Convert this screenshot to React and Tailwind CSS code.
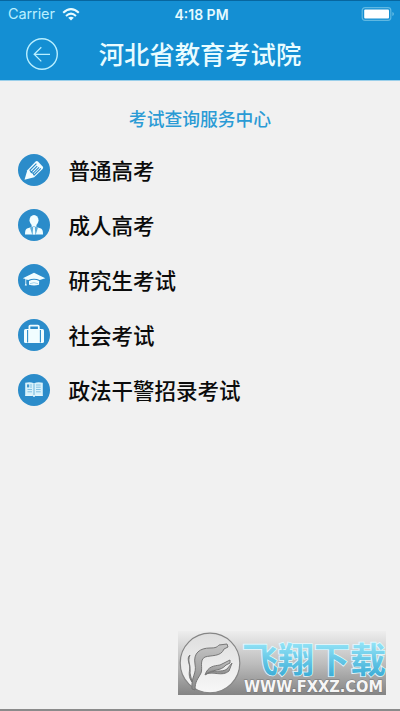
const PencilIcon = () => {
  return (
    <svg width="32" height="32" viewBox="0 0 32 32" fill="none">
      <path
        d="M6.5 25.7L9.3 16.2L17.6 7.6Q18.8 6.5 20 7.6L24.7 12.5Q25.7 13.7 24.6 14.9L16.2 23.3Z"
        fill="#f1fdff"
      />
      <path
        d="M18.4 9.6L12 16.2L13.2 18.2L19.2 12.2M13.2 18.2L15.1 19.3L21 13.4M15.1 19.3L16.1 21L22.8 14.4"
        stroke="#2b8cca"
        strokeWidth="1.2"
      />
    </svg>
  );
};

const PersonIcon = () => {
  return (
    <svg width="32" height="32" viewBox="0 0 32 32" fill="none">
      <ellipse cx="16" cy="11.2" rx="4.5" ry="5.3" fill="#f1fdff" />
      <path
        d="M13.6 15H18.4V18L23 19.5Q25 20.3 25 25.4H7Q7 20.3 9 19.5L13.6 18Z"
        fill="#f1fdff"
      />
      <path d="M12 18.5L14.2 25.4H17.8L20 18.5L16 17.3Z" fill="#5cacd9" />
      <path d="M15.2 18H16.8L17.3 24.5L16 26L14.7 24.5Z" fill="#f1fdff" />
    </svg>
  );
};

const CapIcon = () => {
  return (
    <svg width="32" height="32" viewBox="0 0 32 32" fill="none">
      <path
        d="M16 8.8L27.3 14.2L21.8 15.9Q16 13.8 10.2 15.9L8.2 15.4V19.5L8.9 21.4H6.8L7.4 19.5V15L4.8 14.2Z"
        fill="#f1fdff"
      />
      <path
        d="M11 17Q16 14.5 21.2 17L21 20.8Q16 22.4 11 20.8Z"
        fill="#f1fdff"
      />
      <path d="M12 19.7Q16 17.6 20 19.7" stroke="#91c9e7" strokeWidth="0.8" />
    </svg>
  );
};

const CaseIcon = () => {
  return (
    <svg width="32" height="32" viewBox="0 0 32 32" fill="none">
      <path
        d="M11.4 10.5V7.6Q11.4 6.6 12.4 6.6H19.8Q20.8 6.6 20.8 7.6V10.5"
        stroke="#f1fdff"
        strokeWidth="1.8"
      />
      <rect x="6" y="10" width="20" height="14" rx="1.6" fill="#f1fdff" />
      <path d="M9.6 11V23.5M22.4 11V23.5" stroke="#2b8cca" strokeWidth="1.1" />
    </svg>
  );
};

const BookIcon = () => {
  return (
    <svg width="32" height="32" viewBox="0 0 32 32" fill="none">
      <path
        d="M7.2 8.8Q12 7.4 16 9.2Q20 7.4 24.8 8.8V21.6H17.5L16 22.5L14.5 21.6H7.2Z"
        fill="#d8f2fb"
      />
      <path d="M16 9.5V21" stroke="#71b5dc" strokeWidth="1" />
      <path
        d="M12 11H14M12 13H14M9.5 15.5H14M9.5 17.8H14M18 11H22.7M18 13.2H22.7M18 15.5H22.7M18 17.8H22.7"
        stroke="#79bce0"
        strokeWidth="0.9"
      />
      <rect x="9" y="10.4" width="2.2" height="3" fill="#4197ce" />
      <path d="M7.2 21.4H14.5L16 22.5L17.5 21.4H24.8" stroke="#f1fdff" />
    </svg>
  );
};

const BackIcon = () => {
  return (
    <svg width="34" height="34" viewBox="0 0 34 34" fill="none">
      <circle cx="17" cy="17" r="15.3" stroke="#b9efff" strokeWidth="1.4" />
      <path
        d="M25 17.3H9.5M16.3 10.2L9.2 17.3L16.3 24.4"
        stroke="#b9efff"
        strokeWidth="1.3"
      />
    </svg>
  );
};

const WifiIcon = () => {
  return (
    <svg width="18" height="13" viewBox="0 0 18 13" fill="none">
      <path
        d="M1.2 4.8Q9 -2.4 16.8 4.8"
        stroke="#e9fcff"
        strokeWidth="2.1"
      />
      <path d="M4 7.9Q9 3.4 14 7.9" stroke="#e9fcff" strokeWidth="2" />
      <path d="M6.2 9.8Q9 7.5 11.8 9.8L9 12.6Z" fill="#e9fcff" />
    </svg>
  );
};

const BatteryIcon = () => {
  return (
    <svg width="34" height="14" viewBox="0 0 34 14" fill="none">
      <rect
        x="1.2"
        y="0.7"
        width="28.6"
        height="12.6"
        rx="2.8"
        stroke="#5fb8e2"
        strokeWidth="1.2"
      />
      <rect x="3.2" y="2.6" width="24.8" height="8.8" rx="1" fill="white" />
      <path d="M31.3 5V9Q33 8.5 33 7T31.3 5" fill="#5fb8e2" />
    </svg>
  );
};

const SiteLogo = () => {
  return (
    <svg width="208" height="64" viewBox="0 0 208 64">
      <defs>
        <linearGradient id="panel" x1="0" y1="0" x2="0" y2="1">
          <stop offset="0" stopColor="#eeeeee" />
          <stop offset="0.5" stopColor="#bebebe" />
          <stop offset="1" stopColor="#848484" />
        </linearGradient>
        <linearGradient id="disc" x1="0" y1="0" x2="0" y2="1">
          <stop offset="0" stopColor="#dedede" />
          <stop offset="1" stopColor="#f7f7f7" />
        </linearGradient>
        <linearGradient id="wing" x1="0" y1="0" x2="0" y2="1">
          <stop offset="0" stopColor="#c4c4c4" />
          <stop offset="1" stopColor="#8b8b8b" />
        </linearGradient>
        <linearGradient id="name" x1="0" y1="0" x2="0" y2="1">
          <stop offset="0.15" stopColor="#9ce9fa" />
          <stop offset="0.9" stopColor="#39abd5" />
        </linearGradient>
      </defs>
      <rect width="208" height="64" fill="url(#panel)" />
      <circle
        cx="32"
        cy="32"
        r="29.8"
        fill="url(#disc)"
        stroke="#858585"
        strokeWidth="1.2"
      />
      <g fill="url(#wing)" stroke="#777777" strokeWidth="1">
        <path d="M14 58C13 45 19 43 17 33C15 22 22 17 32 17C38 17 39 16 41 14L49 13L50 16L46 18C43 26 33 24 27 26C21 29 25 37 23 42C20 48 17 50 17 59Z" />
        <path d="M12 24C9 30 13 37 12 42L14 51C8 43 14 37 11 32Q9 26 12 24Z" />
        <path d="M27 44C30 35 36 35 42 34L46 32L52 29L52 32L48 34C42 41 36 37 27 44Z" />
        <path d="M28 43C36 38 44 42 49 38L54 32L51 40C44 46 36 40 28 43Z" />
      </g>
      <text
        x="64"
        y="41.5"
        textLength="144"
        lengthAdjust="spacingAndGlyphs"
        className="font-['Noto_Sans_CJK_SC',sans-serif] text-[35px] font-bold"
        fill="url(#name)"
        stroke="#e3f9fe"
        strokeWidth="1.6"
        paintOrder="stroke"
      >
        飞翔下载
      </text>
      <text
        x="66"
        y="60.5"
        textLength="139"
        lengthAdjust="spacingAndGlyphs"
        className="font-['DejaVu_Sans',sans-serif] text-[15px] font-bold"
        fill="#f6f6f6"
        stroke="#777777"
        strokeWidth="1"
        paintOrder="stroke"
      >
        WWW.FXXZ.COM
      </text>
    </svg>
  );
};

const exams = [
  { name: "普通高考", Icon: PencilIcon },
  { name: "成人高考", Icon: PersonIcon },
  { name: "研究生考试", Icon: CapIcon },
  { name: "社会考试", Icon: CaseIcon },
  { name: "政法干警招录考试", Icon: BookIcon },
];

const Header = () => {
  return (
    <header className="h-[81px] shrink-0 border-t border-t-[#07669f] border-b border-b-[#9acfea] bg-[#148fd3]">
      <div className="grid h-[26px] grid-cols-3 items-center pl-2 pr-[5px] font-['Inter',sans-serif] text-[#e5faff]">
        <div className="flex items-center gap-[7px]">
          <span className="text-[14.5px] tracking-[-0.1px] text-[#b9efff]">
            Carrier
          </span>
          <WifiIcon />
        </div>
        <span className="text-center text-[14px] font-semibold whitespace-nowrap">
          4:18 PM
        </span>
        <div className="flex justify-end">
          <BatteryIcon />
        </div>
      </div>
      <div className="grid h-[53px] grid-cols-[59px_1fr_59px] items-center">
        <button className="pl-[25px]">
          <BackIcon />
        </button>
        <h1 className="text-center text-[25.3px] leading-[53px] font-medium whitespace-nowrap text-[#e9fcff]">
          河北省教育考试院
        </h1>
      </div>
    </header>
  );
};

export default function App() {
  return (
    <div className="flex h-[711px] w-[400px] flex-col overflow-hidden border-b-2 border-[#8b8b8b] bg-[#f1f1f1] font-['Noto_Sans_CJK_SC',sans-serif]">
      <Header />
      <main className="grow pt-[22px]">
        <h2 className="text-center text-[17.8px] leading-[30px] font-medium text-[#2b9bd5]">
          考试查询服务中心
        </h2>
        <ul className="mt-[9px]">
          {exams.map(({ name, Icon }) => (
            <li
              key={name}
              className="flex h-[55px] items-center gap-[18.5px] pl-[18px]"
            >
              <span className="h-8 w-8 rounded-full bg-[#2b8cca]">
                <Icon />
              </span>
              <span className="text-[21.5px] leading-8 font-medium text-[#0b0b0b]">
                {name}
              </span>
            </li>
          ))}
        </ul>
      </main>
      <footer className="flex justify-end pr-[14px] pb-[14px]">
        <SiteLogo />
      </footer>
    </div>
  );
}
